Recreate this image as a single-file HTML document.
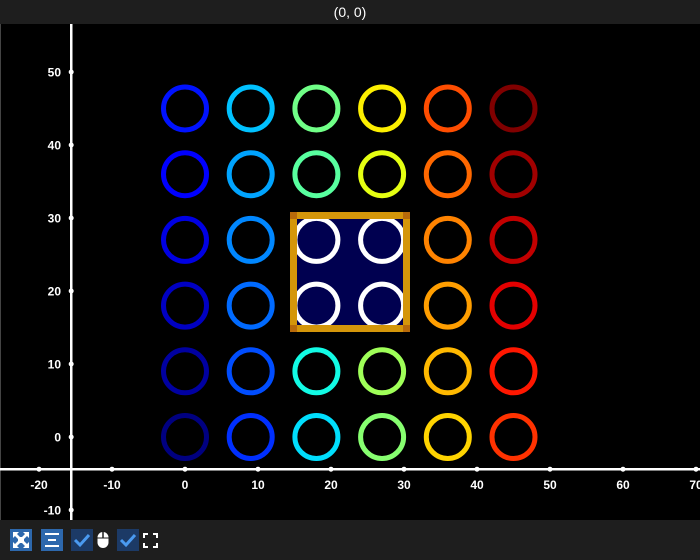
<!DOCTYPE html><html><head><style>
body{margin:0;width:700px;height:560px;background:#1e1e1e;font-family:"Liberation Sans",sans-serif;overflow:hidden;position:relative}
#t{position:absolute;top:0;left:0;width:700px;height:24px;color:#fff;text-align:center;font-size:14px;line-height:24px}
#p{position:absolute;top:24px;left:0}
.b{position:absolute;top:529px;width:22px;height:22px}
</style></head><body>
<div id="t">(0, 0)</div>
<svg id="p" width="700" height="496" viewBox="0 24 700 496"></svg>
<div class="b" style="left:10px;background:#2d68ad"><svg width="22" height="22"><g fill="#fff"><rect x="8" y="8" width="6" height="6"/><path d="M3 3h6l-2 2 3 3-2 2-3-3-2 2zM19 3v6l-2-2-3 3-2-2 3-3-2-2zM3 19v-6l2 2 3-3 2 2-3 3 2 2zM19 19h-6l2-2-3-3 2-2 3 3 2-2z"/></g></svg></div>
<div class="b" style="left:41px;background:#2d68ad"><svg width="22" height="22"><g fill="#fff"><rect x="4" y="4" width="14" height="2"/><rect x="7" y="10" width="8" height="2"/><rect x="4" y="16" width="14" height="2"/></g></svg></div>
<div class="b" style="left:71px;background:#1c3a66"><svg width="22" height="22"><path d="M4 11l5 5 9-10" stroke="#4a9af0" stroke-width="3" fill="none"/></svg></div>
<svg style="position:absolute;left:96px;top:531px" width="14" height="18"><rect x="1.5" y="1" width="11" height="16" rx="5.5" fill="#fff"/><line x1="7" y1="1" x2="7" y2="7" stroke="#1e1e1e" stroke-width="1.5"/><line x1="1.5" y1="7" x2="12.5" y2="7" stroke="#1e1e1e" stroke-width="1"/></svg>
<div class="b" style="left:117px;background:#1c3a66"><svg width="22" height="22"><path d="M4 11l5 5 9-10" stroke="#4a9af0" stroke-width="3" fill="none"/></svg></div>
<svg style="position:absolute;left:143px;top:533px" width="15" height="15"><path d="M1 5V1h4M10 1h4v4M14 10v4h-4M5 14H1v-4" stroke="#fff" stroke-width="2" fill="none"/></svg>
<script>
var s='<rect x="0" y="24" width="700" height="496" fill="#000"/><rect x="0" y="24" width="1" height="496" fill="#444"/>';
function X(v){return 185+v*7.3}function Y(v){return 437-v*7.3}
function seg(t,p){for(var i=0;i<p.length-1;i++){if(t<=p[i+1][0]){var a=p[i],b=p[i+1];return a[1]+(b[1]-a[1])*(t-a[0])/(b[0]-a[0]);}}return p[p.length-1][1]}
var R=[[0,0],[0.35,0],[0.66,1],[0.89,1],[1,0.5]],G=[[0,0],[0.125,0],[0.375,1],[0.64,1],[0.91,0],[1,0]],B=[[0,0.5],[0.11,1],[0.34,1],[0.65,0],[1,0]];
function c(x){return Math.round(255*Math.max(0,Math.min(1,x)))}
var inner='';
for(var i=0;i<6;i++)for(var j=0;j<6;j++){var t=(i*6+j)/35,col='rgb('+c(seg(t,R))+','+c(seg(t,G))+','+c(seg(t,B))+')';
var cx=X(i*9),cy=Y(j*9);
if((i==2||i==3)&&(j==2||j==3))inner+='<circle cx="'+cx+'" cy="'+cy+'" r="21.5" stroke="#fff" stroke-width="5" fill="none"/>';
else s+='<circle cx="'+cx+'" cy="'+cy+'" r="21.5" stroke="'+col+'" stroke-width="5" fill="none"/>';}
s+='<defs><clipPath id="cl"><rect x="297" y="219" width="106" height="106"/></clipPath></defs><rect x="297" y="219" width="106" height="106" fill="#000050"/><g clip-path="url(#cl)">'+inner+'</g>';
s+='<path d="M293.5 215.5h113v113h-113z" stroke="#d4960a" stroke-width="7" fill="none"/>';
[[290,212],[403,212],[290,325],[403,325]].forEach(function(p){s+='<rect x="'+p[0]+'" y="'+p[1]+'" width="7" height="7" fill="#b86a0a"/>'});
s+='<rect x="0" y="468" width="700" height="2.5" fill="#fff"/><rect x="70" y="24" width="2.5" height="496" fill="#fff"/>';
for(var v=-20;v<=70;v+=10){var x=X(v);s+='<circle cx="'+x+'" cy="469.2" r="2.5" fill="#fff"/><text x="'+x+'" y="489" fill="#fff" font-size="12" font-weight="bold" text-anchor="middle">'+v+'</text>'}
for(var v=-10;v<=50;v+=10){var y=Y(v);s+='<circle cx="71.2" cy="'+y+'" r="2.5" fill="#fff"/><text x="61" y="'+(y+4.5)+'" fill="#fff" font-size="12" font-weight="bold" text-anchor="end">'+v+'</text>'}
document.getElementById('p').innerHTML=s;
</script>
</body></html>
